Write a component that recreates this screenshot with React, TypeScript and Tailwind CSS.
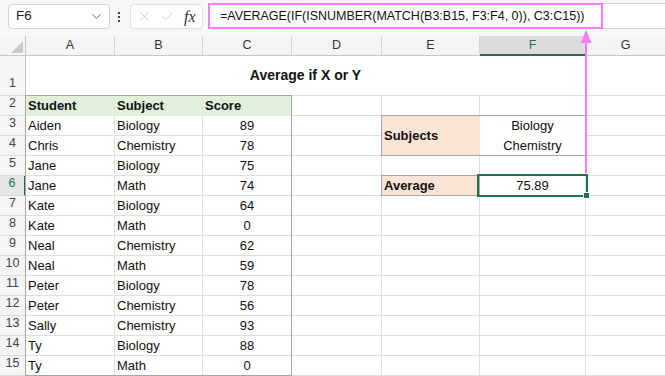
import { ChevronDown, X, Check } from 'lucide-react';
import type { ReactNode } from 'react';

const COLS = ['A', 'B', 'C', 'D', 'E', 'F', 'G'];

const ROWS: [string, string, number][] = [
  ['Aiden', 'Biology', 89],
  ['Chris', 'Chemistry', 78],
  ['Jane', 'Biology', 75],
  ['Jane', 'Math', 74],
  ['Kate', 'Biology', 64],
  ['Kate', 'Math', 0],
  ['Neal', 'Chemistry', 62],
  ['Neal', 'Math', 59],
  ['Peter', 'Biology', 78],
  ['Peter', 'Chemistry', 56],
  ['Sally', 'Chemistry', 93],
  ['Ty', 'Biology', 88],
  ['Ty', 'Math', 0],
];

const GRID =
  'grid grid-cols-[26px_89px_88px_89px_90px_98px_106px_80px] grid-rows-[20px_40px_repeat(14,20px)]';

function Cell({
  children,
  className = '',
  line = 'border-[#e0e0e0]',
}: {
  children?: ReactNode;
  className?: string;
  line?: string;
}) {
  return (
    <div className={`flex items-center overflow-hidden whitespace-nowrap border-r border-b px-[2px] text-[13px] ${line} ${className}`}>
      {children}
    </div>
  );
}

function RowHead({ n, active = false }: { n: number; active?: boolean }) {
  return (
    <div
      className={`flex items-end justify-center border-b border-[#dadada] pb-[2px] text-[12.5px] ${
        active ? 'border-r-2 border-r-[#217346] bg-[#e6e6e6] text-[#217346]' : 'border-r border-r-[#c6c6c6] bg-[#f5f5f5] text-[#444]'
      }`}
    >
      {n}
    </div>
  );
}

// right-hand part of each data row: D, E, F, G
function RightSide({ row }: { row: number }) {
  if (row === 3)
    return (
      <>
        <Cell />
        <Cell className="row-span-2 bg-[#fce4d6] font-bold" line="border-[#fce4d6]">
          Subjects
        </Cell>
        <Cell className="justify-center" line="border-white">
          Biology
        </Cell>
        <Cell />
      </>
    );
  if (row === 4)
    return (
      <>
        <Cell />
        <Cell className="justify-center">Chemistry</Cell>
        <Cell />
      </>
    );
  if (row === 6)
    return (
      <>
        <Cell />
        <Cell className="bg-[#fce4d6] font-bold" line="border-[#fce4d6]">
          Average
        </Cell>
        <Cell className="justify-center">75.89</Cell>
        <Cell />
      </>
    );
  return (
    <>
      <Cell />
      <Cell />
      <Cell />
      <Cell />
    </>
  );
}

export default function App() {
  return (
    <div className="relative h-[376px] w-[665px] overflow-hidden bg-white font-['Liberation_Sans',Arial,sans-serif] text-[#111]">
      {/* formula toolbar */}
      <div className="flex h-[36px] items-start bg-[#f7f7f7] pl-[8px] pt-[3px]">
        <div className="mt-px flex h-[25px] w-[102px] items-center justify-between rounded-[4px] border border-[#d6d6d6] bg-white pl-[7px] pr-[5px] text-[13.5px] text-[#222]">
          F6
          <ChevronDown size={15} strokeWidth={1.5} className="text-[#555]" />
        </div>
        <div className="ml-[8px] mt-[9px] flex flex-col gap-[2px]">
          <span className="h-[2px] w-[2px] bg-[#444]" />
          <span className="h-[2px] w-[2px] bg-[#444]" />
          <span className="h-[2px] w-[2px] bg-[#444]" />
        </div>
        <div className="ml-[10px] mt-px flex h-[25px] w-[73px] items-center rounded-[4px] border border-[#e0e0e0] bg-white pl-[6px]">
          <X size={15} strokeWidth={1.2} className="text-[#c4c4c4]" />
          <Check size={15} strokeWidth={1.2} className="ml-[8px] text-[#c4c4c4]" />
          <span className="ml-[9px] font-['Liberation_Serif',serif] text-[16px] italic text-[#333]">fx</span>
        </div>
        <div className="ml-[5px] flex h-[26px] flex-1">
          <div className="flex w-[395px] items-center border-2 border-[#f47ff4] bg-white pl-[10px] text-[12.5px] text-[#111]">
            =AVERAGE(IF(ISNUMBER(MATCH(B3:B15, F3:F4, 0)), C3:C15))
          </div>
          <div className="flex-1 border-y border-[#d6d6d6] bg-white" />
        </div>
      </div>

      {/* sheet */}
      <div className="relative">
        <div className={GRID}>
          {/* column headers */}
          <div className="relative border-r border-b border-[#c6c6c6] bg-[#f5f5f5]">
            <svg width="26" height="20" className="absolute inset-0">
              <polygon points="11,17 23,5 23,17" fill="#c9c9c9" />
            </svg>
          </div>
          {COLS.map((c) =>
            c === 'F' ? (
              <div
                key={c}
                className="flex items-center justify-center border-r border-r-[#d4d4d4] border-b-2 border-b-[#217346] bg-[#dcdcdc] text-[12.5px] text-[#217346]"
              >
                {c}
              </div>
            ) : (
              <div
                key={c}
                className="flex items-center justify-center border-r border-b border-r-[#d4d4d4] border-b-[#c6c6c6] bg-[#f5f5f5] text-[12.5px] text-[#333]"
              >
                {c}
              </div>
            )
          )}

          {/* row 1 */}
          <RowHead n={1} />
          <Cell className="col-span-6 justify-center pb-[1px] text-[14px] font-bold">Average if X or Y</Cell>
          <Cell />

          {/* row 2 */}
          <RowHead n={2} />
          <Cell className="bg-[#e2efda] font-bold" line="border-[#e2efda]">Student</Cell>
          <Cell className="bg-[#e2efda] font-bold" line="border-[#e2efda]">Subject</Cell>
          <Cell className="bg-[#e2efda] font-bold" line="border-[#e2efda]">Score</Cell>
          <RightSide row={2} />

          {ROWS.map(([name, subject, score], i) => (
            <div key={i} className="contents">
              <RowHead n={i + 3} active={i + 3 === 6} />
              <Cell>{name}</Cell>
              <Cell>{subject}</Cell>
              <Cell className="justify-center">{score}</Cell>
              <RightSide row={i + 3} />
            </div>
          ))}
        </div>

        {/* borders and selection drawn over the cells */}
        <div className={`pointer-events-none absolute inset-0 ${GRID}`}>
          <div className="col-start-2 col-span-3 row-start-3 row-span-14 -mt-px -ml-px border border-[#a6a6a6]" />
          <div className="col-start-6 col-span-2 row-start-4 row-span-2 -mt-px -ml-px border border-[#a6a6a6]" />
          <div className="col-start-6 row-start-7 -mt-px -ml-px border border-[#a6a6a6]" />
          <div className="relative col-start-7 row-start-7 -mt-[2px] -mr-[2px] -mb-px -ml-[3px] border-2 border-[#217346]">
            <div className="absolute -right-[4px] -bottom-[4px] h-[7px] w-[7px] border border-white bg-[#217346]" />
          </div>
        </div>
      </div>

      {/* pink pointer from formula bar to result cell */}
      <svg className="pointer-events-none absolute inset-0" width="665" height="376">
        <line x1="586" y1="40" x2="586" y2="173" stroke="#f47ff4" strokeWidth="2" />
        <polygon points="586,30 580.5,43 591.5,43" fill="#f47ff4" />
      </svg>
    </div>
  );
}
